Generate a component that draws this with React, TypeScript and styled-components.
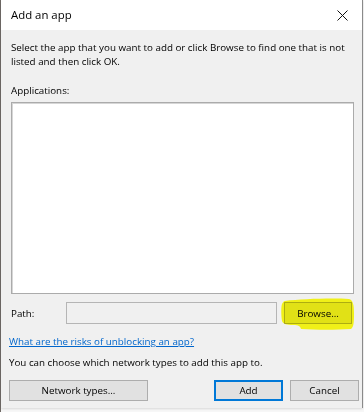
import React from "react";
import styled, { createGlobalStyle } from "styled-components";

const Global = createGlobalStyle`
  html, body { margin: 0; padding: 0; background: #f7f7f7; }
  body { font-family: "Segoe UI", "Open Sans", "Noto Sans", sans-serif; color: #000; }
  * { box-sizing: border-box; }
`;

const Page = styled.div`
  width: 364px;
  height: 412px;
  display: flex;
  align-items: flex-start;
  overflow: hidden;
`;

const Edge = styled.div`
  width: 1px;
  height: 412px;
  background: #6f6a66;
  flex: none;
`;

const Window = styled.div`
  position: relative;
  width: 362px;
  height: 408px;
  background: #f0f0f0;
  border-right: 1px solid #8a8a8a;
  display: flex;
  flex-direction: column;
  box-shadow: 0 1px 2px rgba(0,0,0,0.12);
`;

const TitleBar = styled.div`
  height: 30px;
  background: #fff;
  display: flex;
  align-items: center;
  justify-content: space-between;
  padding: 0 8px 0 10px;
  flex: none;
`;

const Title = styled.span`
  font-size: 11.4px;
  line-height: 16px;
`;

const Close = styled.svg`
  width: 11px;
  height: 11px;
  margin-right: 6px;
`;

const Body = styled.div`
  display: flex;
  flex-direction: column;
  padding: 11px 8px 0 10px;
  flex: 1;
`;

const Text = styled.div<{ $mt?: number; $ml?: number }>`
  font-size: 9.8px;
  line-height: 14px;
  white-space: nowrap;
  margin-top: ${(p) => p.$mt ?? 0}px;
  margin-left: ${(p) => p.$ml ?? 0}px;
`;

const ListBox = styled.div`
  margin-top: 4px;
  height: 192px;
  background: #fff;
  border: 1px solid #ababab;
  box-shadow: inset 1px 1px 0 #d6d6d6;
`;

const PathRow = styled.div`
  margin-top: 8px;
  height: 22px;
  display: flex;
  align-items: center;
`;

const PathLabel = styled.span`
  font-size: 9.8px;
  width: 55px;
  flex: none;
`;

const PathInput = styled.div`
  width: 211px;
  height: 22px;
  background: #f0f0f0;
  border: 1px solid #b5b5b5;
  flex: none;
`;

const Button = styled.div<{ $w: number; $h?: number; $default?: boolean }>`
  width: ${(p) => p.$w}px;
  height: ${(p) => p.$h ?? 21}px;
  flex: none;
  display: flex;
  align-items: center;
  justify-content: center;
  background: #e1e1e1;
  border: 1px solid ${(p) => (p.$default ? "#0078d7" : "#adadad")};
  box-shadow: ${(p) => (p.$default ? "inset 0 0 0 1px #0078d7" : "none")};
  font-size: 9.8px;
  color: #000;
`;

const BrowseWrap = styled.div`
  position: relative;
  margin-left: 7px;
`;

const Highlight = styled.svg`
  position: absolute;
  left: -3px;
  top: -5px;
  width: 74px;
  height: 33px;
  mix-blend-mode: multiply;
  pointer-events: none;
`;

const Link = styled.a`
  margin-top: 11px;
  margin-left: -2px;
  font-size: 9.8px;
  line-height: 14px;
  color: #0066cc;
  text-decoration: underline;
  white-space: nowrap;
  align-self: flex-start;
`;

const Footer = styled.div`
  margin-top: 10px;
  margin-left: -2px;
  margin-right: -5px;
  display: flex;
  align-items: center;
  gap: 7px;
`;

const Spacer = styled.div`
  flex: 1;
`;

export default function App() {
  return (
    <Page>
      <Global />
      <Edge />
      <Window>
        <TitleBar>
          <Title>Add an app</Title>
          <Close viewBox="0 0 11 11">
            <path d="M0.5 0.5 L10.5 10.5 M10.5 0.5 L0.5 10.5" stroke="#111" strokeWidth="1" fill="none" />
          </Close>
        </TitleBar>
        <Body>
          <Text>
            Select the app that you want to add or click Browse to find one that is not
          </Text>
          <Text>listed and then click OK.</Text>
          <Text $mt={15}>Applications:</Text>
          <ListBox />
          <PathRow>
            <PathLabel>Path:</PathLabel>
            <PathInput />
            <BrowseWrap>
              <Button $w={68} $h={22}>Browse...</Button>
              <Highlight viewBox="0 0 74 33">
                <path
                  d="M4 4 C20 2 50 1 68 2 C72 3 73 8 73 16 C73 24 73 30 70 32 C55 33 35 33 20 32 C19 29 18 28 12 28 C6 28 2 27 1 24 C0 18 0 10 1 7 C2 5 3 4 4 4 Z"
                  fill="#ffff00"
                  fillOpacity="0.9"
                />
              </Highlight>
            </BrowseWrap>
          </PathRow>
          <Link href="#">What are the risks of unblocking an app?</Link>
          <Text $mt={7} $ml={-2}>You can choose which network types to add this app to.</Text>
          <Footer>
            <Button $w={139}>Network types...</Button>
            <Spacer />
            <Button $w={69} $default>Add</Button>
            <Button $w={69}>Cancel</Button>
          </Footer>
        </Body>
      </Window>
    </Page>
  );
}
